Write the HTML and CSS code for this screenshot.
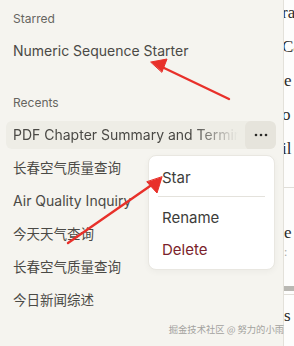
FILE: index.html
```html
<!DOCTYPE html>
<html lang="en">
	<head>
		<title>Chats</title>
		<link rel="stylesheet" href="styles.css">
	</head>
	<body>
		<div class="layout">
			<nav class="sidebar">
				<div class="section-label">Starred</div>
				<div class="chat-item starred">Numeric Sequence Starter</div>

				<div class="section-label recents">Recents</div>
				<div class="chat-list">
					<div class="chat-item active">
						<span class="chat-title">PDF Chapter Summary and Terminology</span>
						<span class="more-btn">
							<svg width="16" height="4" viewBox="0 0 16 4">
								<circle cx="3" cy="2" r="1.3" fill="#2b2b28"/>
								<circle cx="8" cy="2" r="1.3" fill="#2b2b28"/>
								<circle cx="13" cy="2" r="1.3" fill="#2b2b28"/>
							</svg>
						</span>
					</div>
					<div class="chat-item cjk">长春空气质量查询</div>
					<div class="chat-item">Air Quality Inquiry</div>
					<div class="chat-item cjk">今天天气查询</div>
					<div class="chat-item cjk">长春空气质量查询</div>
					<div class="chat-item cjk">今日新闻综述</div>
				</div>

				<div class="menu">
					<div class="menu-item">Star</div>
					<div class="menu-divider"></div>
					<div class="menu-item">Rename</div>
					<div class="menu-item danger">Delete</div>
				</div>
			</nav>
			<main class="content">
				<p class="frag first clip">ra</p>
				<p class="frag clip">Ca</p>
				<p class="frag">e</p>
				<p class="frag clip">o</p>
				<p class="frag clip">il</p>
				<hr class="rule">
				<p class="frag e2">e</p>
				<p class="frag dim">:</p>
				<div class="gray-bar"></div>
				<hr class="rule thin">
				<p class="frag s">s</p>
			</main>
		</div>

		<div class="watermark">掘金技术社区 @ 努力的小雨</div>

		<svg class="arrows" width="294" height="346" viewBox="0 0 294 346">
			<g fill="#e8302a" stroke="#e8302a" stroke-linecap="round">
				<line x1="229" y1="99" x2="162" y2="67" stroke-width="2.4"/>
				<polygon points="151,62 167,59 162,72" stroke-width="1"/>
				<line x1="68" y1="243" x2="153" y2="184" stroke-width="2.4"/>
				<polygon points="162,177 157,193 147,182" stroke-width="1"/>
			</g>
		</svg>
	</body>
</html>
```

FILE: styles.css
```css
body {
	margin: 0;
	font-family: Inter, "Noto Sans", sans-serif;
	background-color: #f5f4ef;
	color: #4a4945;
	overflow: hidden;
}
	.layout {
		display: flex;
		height: 346px;
	}
	.sidebar {
		position: relative;
		width: 284px;
		flex: none;
		padding: 11px 0 0 0;
		box-sizing: border-box;
		border-right: 1px solid #e3e1da;
	}
	.section-label {
		font-size: 12px;
		color: #66655f;
		line-height: 16px;
		padding-left: 13px;
	}
	.section-label.recents {
		margin-top: 30px;
	}
	.chat-item {
		font-size: 14px;
		line-height: 28px;
		height: 28px;
		margin: 0 8px 0 6px;
		padding-left: 7px;
		white-space: nowrap;
		overflow: hidden;
		color: #4a4945;
	}
	.chat-item.starred {
		margin-top: 10px;
	}
	.chat-list {
		margin-top: 10px;
		display: flex;
		flex-direction: column;
		gap: 5px;
	}
	.chat-item.cjk {
		font-family: "Noto Sans CJK SC", sans-serif;
		font-size: 13.5px;
		line-height: 27px;
	}
	.chat-item.active {
		display: flex;
		align-items: center;
		background: #eeede6;
		border-radius: 6px;
		margin-right: 7px;
	}
	.chat-title {
		flex: 1;
		min-width: 0;
		overflow: hidden;
		-webkit-mask-image: linear-gradient(to right, #000 80%, transparent 100%);
		mask-image: linear-gradient(to right, #000 80%, transparent 100%);
	}
	.more-btn {
		flex: none;
		display: flex;
		align-items: center;
		justify-content: center;
		width: 31px;
		height: 29px;
		margin-left: 7px;
		border-radius: 6px;
		background: #e6e4dc;
	}
	.menu {
		position: absolute;
		left: 148px;
		top: 155px;
		width: 127px;
		box-sizing: border-box;
		background: #fff;
		border: 1px solid #e9e7e1;
		border-radius: 8px;
		padding: 6px 8px 3px 8px;
		box-shadow: 0 2px 6px rgba(0, 0, 0, 0.04);
	}
	.menu-item {
		font-size: 15px;
		line-height: 32px;
		padding-left: 5px;
		color: #3d3d3a;
	}
	.menu-divider {
		height: 1px;
		background: #e4e2dc;
		margin: 2px 1px 5px 1px;
	}
	.menu-item.danger {
		color: #7b1f2c;
	}
	.content {
		flex: 1;
		background: #fdfdfc;
		overflow: hidden;
		font-family: "Liberation Serif", serif;
		font-size: 17px;
		color: #2a2a28;
	}
	.frag {
		margin: 0;
		height: 34px;
		line-height: 34px;
		white-space: nowrap;
	}
	.frag.first {
		margin-top: -4px;
	}
	.frag.clip {
		margin-left: -2px;
	}
	.rule {
		border: none;
		border-top: 1px solid #e0ded8;
		margin: 21px 0 32px 0;
	}
	.frag.e2 {
		height: 26px;
		line-height: 26px;
	}
	.frag.dim {
		color: #a9a8a3;
		font-size: 12px;
		height: 12px;
		line-height: 12px;
	}
	.gray-bar {
		height: 5px;
		margin-top: 28px;
		background: #b9b8b3;
	}
	.rule.thin {
		margin: 3px 0 6px 0;
	}
	.frag.s {
		height: 30px;
		line-height: 30px;
	}
	.watermark {
		position: absolute;
		right: 10px;
		bottom: 10px;
		font-family: "Noto Sans CJK SC", sans-serif;
		font-size: 9.3px;
		color: #a3a29e;
	}
	.arrows {
		position: absolute;
		left: 0;
		top: 0;
		pointer-events: none;
	}
```
